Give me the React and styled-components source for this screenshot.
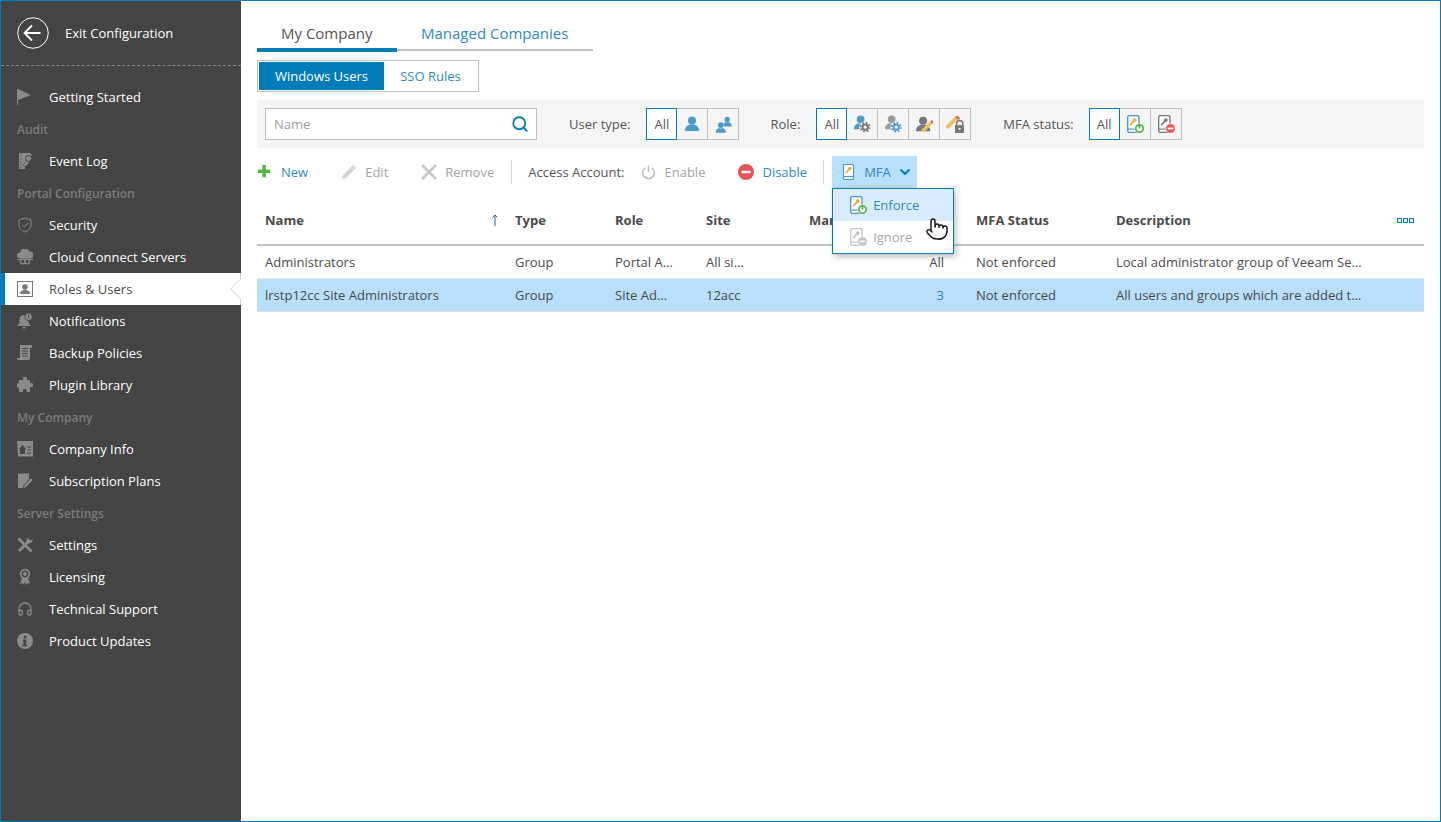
import React from 'react';
import styled, { createGlobalStyle } from 'styled-components';
import { Pointer, Search, ChevronDown, Headphones } from 'lucide-react';

const GlobalStyle = createGlobalStyle`
html, body {
  margin: 0;
  padding: 0;
  background: #fff;
}
body {
  font-family: "Open Sans", "Liberation Sans", sans-serif;
  font-size: 13px;
  color: #4a4a4a;
}
* { box-sizing: border-box; }
`

const BLUE = '#007cba';
const GRID = '250px 100px 91px 103px 167px 140px 1fr';

const Frame = styled.div`
width: 1441px;
height: 822px;
border: 1px solid ${BLUE};
display: flex;
overflow: hidden;
`

const Sidebar = styled.div`
width: 240px;
flex-shrink: 0;
background: #444444;
display: flex;
flex-direction: column;
`

const ExitRow = styled.div`
height: 65px;
border-bottom: 1px dashed #8a8a8a;
display: flex;
align-items: center;
gap: 16px;
padding: 0 0 1px 16px;
color: #fff;
`

const NavList = styled.div`
padding-top: 15px;
display: flex;
flex-direction: column;
`

const NavHeading = styled.div`
height: 32px;
line-height: 33px;
padding-left: 16px;
font-size: 12px;
font-weight: 600;
color: #7c7c7c;
`

const NavItem = styled.div`
height: 32px;
display: flex;
align-items: center;
gap: 16px;
padding-left: ${p => p.$active ? '12px' : '16px'};
margin-left: 0;
position: relative;
color: ${p => p.$active ? '#4a4a4a' : '#fff'};
background: ${p => p.$active ? '#fff' : 'transparent'};
border-left: ${p => p.$active ? `4px solid ${BLUE}` : 'none'};
svg { flex-shrink: 0; }
`

const Notch = styled.svg`
position: absolute;
right: 0;
top: 0;
`

const Main = styled.div`
flex: 1;
min-width: 0;
padding: 0 16px;
display: flex;
flex-direction: column;
`

const Tabs = styled.div`
height: 51px;
display: flex;
align-items: flex-end;
`

const Tab = styled.div`
font-size: 15px;
height: ${p => p.$active ? '37px' : '35px'};
width: ${p => p.$active ? '140px' : '196px'};
padding: 0 24px;
line-height: ${p => p.$active ? '36px' : '34px'};
margin-bottom: ${p => p.$active ? '0' : '1px'};
color: ${p => p.$active ? '#555' : '#2f88bd'};
border-bottom: ${p => p.$active ? `4px solid ${BLUE}` : '2px solid #bfbfbf'};
`

const SubTabs = styled.div`
margin-top: 8px;
width: 222px;
height: 32px;
padding: 1px;
border: 1px solid #bfbfbf;
display: flex;
`

const SubTab = styled.div`
width: ${p => p.$active ? '125px' : '93px'};
line-height: 28px;
text-align: center;
color: ${p => p.$active ? '#fff' : '#2f88bd'};
background: ${p => p.$active ? BLUE : '#fff'};
`

const FilterBar = styled.div`
margin-top: 8px;
height: 48px;
background: #f5f5f5;
padding-left: 8px;
display: flex;
align-items: center;
`

const SearchBox = styled.div`
width: 272px;
height: 32px;
background: #fff;
border: 1px solid #bfbfbf;
padding: 0 7px 0 8px;
display: flex;
align-items: center;
justify-content: space-between;
color: #a0a0a0;
`

const FilterLabel = styled.span`
margin-left: ${p => p.$gap}px;
margin-right: ${p => p.$after}px;
color: #555;
`

const ButtonGroup = styled.div`
display: flex;
`

const FilterButton = styled.div`
width: 31px;
height: 32px;
display: flex;
align-items: center;
justify-content: center;
background: ${p => p.$active ? '#fff' : 'transparent'};
border: 1px solid ${p => p.$active ? BLUE : '#bfbfbf'};
border-left: ${p => p.$active ? `1px solid ${BLUE}` : 'none'};
color: #555;
`

const Toolbar = styled.div`
margin-top: 8px;
height: 32px;
display: flex;
align-items: center;
position: relative;
z-index: 2;
`

const Tool = styled.div`
display: flex;
align-items: center;
gap: ${p => p.$gap || 8}px;
margin-left: ${p => p.$left || 0}px;
color: ${p => p.$off ? '#a3a3a3' : '#2f88bd'};
`

const ToolSep = styled.div`
width: 1px;
height: 24px;
margin-left: ${p => p.$left}px;
background: #d8d8d8;
`

const ToolLabel = styled.span`
margin-left: 16px;
color: #555;
`

const MfaButton = styled.div`
position: relative;
align-self: flex-start;
width: 85px;
height: 33px;
margin-left: 8px;
padding: 0 0 1px 10px;
display: flex;
align-items: center;
background: #b8dffc;
color: #2f88bd;
`

const MfaLabel = styled.span`
margin-left: 6px;
margin-right: 6px;
`

const Menu = styled.div`
position: absolute;
left: 0;
top: 32px;
width: 122px;
height: 66px;
background: #fff;
border: 1px solid ${BLUE};
box-shadow: 2px 3px 6px rgba(0,0,0,.25);
`

const MenuItem = styled.div`
height: 32px;
display: flex;
align-items: center;
gap: 6px;
padding-left: 16px;
background: ${p => p.$hover ? '#d9ecfd' : '#fff'};
color: ${p => p.$off ? '#a8a8a8' : '#2f88bd'};
`

const HandCursor = styled.div`
position: absolute;
left: 92px;
top: 28px;
line-height: 0;
`

const Table = styled.div`
margin-top: 8px;
`

const HeadRow = styled.div`
height: 50px;
display: grid;
grid-template-columns: ${GRID};
align-items: center;
border-bottom: 2px solid #c4c4c4;
font-weight: 700;
color: #4a4a4a;
padding-bottom: 0;
`

const Row = styled.div`
height: 33px;
display: grid;
grid-template-columns: ${GRID};
align-items: center;
border-bottom: 1px solid #e3e3e3;
background: ${p => p.$selected ? '#b8dffc' : '#fff'};
color: #4a4a4a;
`

const Cell = styled.div`
padding: ${p => p.$right ? '0 24px 0 8px' : '0 8px'};
white-space: nowrap;
overflow: hidden;
text-align: ${p => p.$right ? 'right' : 'left'};
color: ${p => p.$link ? '#2f88bd' : 'inherit'};
`

const HeadCell = styled(Cell)`
display: flex;
align-items: center;
justify-content: space-between;
overflow: visible;
`

const ColumnDots = styled.div`
display: flex;
gap: 1px;
margin-right: 2px;
`

const Dot = styled.span`
width: 5px;
height: 5px;
border: 1px solid ${BLUE};
`

const Ico = ({ size = 16, children }) => (
  <svg width={size} height={size} viewBox="0 0 16 16">{children}</svg>
)

const G = '#8b8b8b';
const D = '#444444';

const navIcons = {
  flag: <Ico><path d="M0 0h1v16H0z" fill={G} /><path d="M1 0l13 6L1 11z" fill={G} /></Ico>,
  log: <Ico><path d="M2 0h11l2 2-4 5-3 4v5H2z" fill={G} /><path d="M4 0v16" stroke={D} strokeWidth=".8" strokeDasharray="1 1" /><circle cx="11.5" cy="5.5" r="3" fill={G} stroke={D} /><path d="M10 7.500l-4 4.500 1 1.500 1-1 1 1 3-4z" fill={G} stroke={D} strokeWidth=".6" /></Ico>,
  shield: <Ico><path d="M8 1l6 2v5c0 3.500-3 6-6 7-3-1-6-3.500-6-7V3z" fill="none" stroke={G} /><path d="M5 8l2.200 2L11 6" fill="none" stroke={G} /></Ico>,
  cloud: <Ico><path d="M3 10a3 3 0 0 1 0-6 5 5 0 0 1 9.500-1A3.500 3.500 0 0 1 13.500 10z" fill={G} transform="translate(0 -.5)" /><path d="M0 10.500h16" stroke={G} /><circle cx="5.800" cy="12.500" r="2.400" fill="none" stroke={G} strokeWidth="1.300" /><circle cx="10.200" cy="12.500" r="2.400" fill="none" stroke={G} strokeWidth="1.300" /></Ico>,
  roles: <Ico><rect x=".5" y=".5" width="15" height="15" fill="#fff" stroke="#777" /><circle cx="8" cy="6" r="2.800" fill="#777" /><path d="M3 13c0-3 2-4 5-4s5 1 5 4z" fill="#777" /></Ico>,
  bell: <Ico><path d="M7 2a4.500 4.500 0 0 0-4.500 4.500V10L0 13h14l-2.500-3V8z" fill={G} /><path d="M5 14h4l-2 2z" fill={G} /><circle cx="11.500" cy="3.800" r="3.800" fill={G} stroke={D} strokeWidth=".8" /><path d="M11.500 1.500v3M11.500 5.300v.8" stroke={D} /></Ico>,
  scroll: <Ico><path d="M3 0h12v3h-2v10a2 2 0 0 1-2 2H1a2 2 0 0 1-1-2h3z" fill={G} /><path d="M5 3.500h6M5 6h6M5 8.500h6M5 11h6" stroke={D} /></Ico>,
  puzzle: <Ico><path d="M6 1a2 2 0 0 1 4 0l-.5 2H13v3.500l1-.5a2 2 0 0 1 0 4.500l-1-.5V15H9.500l.3-1a2 2 0 0 0-4 0l.2 1H2v-4.500l-.3.2a2 2 0 0 1 0-4.700l.3.2V3h4.300z" fill={G} /></Ico>,
  company: <Ico><path d="M0 0h16v15l-1 1-1-1-1 1-1-1-1 1-1-1-1 1-1-1-1 1-1-1-1 1-1-1-1 1-2-1z" fill={G} /><path d="M2 8l3.500-4L9 8H8v5H3V8z" fill={D} /><path d="M10 6h4M10 9h4M10 12h4" stroke={D} /></Ico>,
  plan: <Ico><path d="M1 1h11v5l-5 6-1 3H1z" fill={G} /><path d="M1 .5h11" stroke={G} strokeDasharray="1 1" /><path d="M14 5l2 2-7 7.500-3 1 1-3z" fill={G} stroke={D} strokeWidth=".6" /></Ico>,
  tools: <Ico><path d="M1.500 1.500L14.500 14.500" stroke={G} strokeWidth="2.600" /><path d="M13 3L2 14" stroke={G} strokeWidth="2.800" /><path d="M10 1.500a4 4 0 0 0 1 5l3.500-1a4 4 0 0 0 1-3.500l-2.500 2-2-1.500 1.500-2.500z" fill={G} /></Ico>,
  award: <Ico><circle cx="8" cy="5" r="4.300" fill="none" stroke={G} strokeWidth="1.800" /><circle cx="8" cy="5" r="1.900" fill={G} /><path d="M5 9l-2 6 2.500-1 1.500 2 1-4 1 4 1.500-2 2.500 1-2-6-3 1z" fill={G} /></Ico>,
  info: <Ico><circle cx="8" cy="8" r="8" fill={G} /><circle cx="8" cy="4" r="1.500" fill={D} /><path d="M6 6.500h3.200V12H10.500v1.200h-5V12h1V7.700H6z" fill={D} /></Ico>,
}

const nav = [
  { label: 'Getting Started', icon: 'flag' },
  { heading: 'Audit' },
  { label: 'Event Log', icon: 'log' },
  { heading: 'Portal Configuration' },
  { label: 'Security', icon: 'shield' },
  { label: 'Cloud Connect Servers', icon: 'cloud' },
  { label: 'Roles & Users', icon: 'roles', active: true },
  { label: 'Notifications', icon: 'bell' },
  { label: 'Backup Policies', icon: 'scroll' },
  { label: 'Plugin Library', icon: 'puzzle' },
  { heading: 'My Company' },
  { label: 'Company Info', icon: 'company' },
  { label: 'Subscription Plans', icon: 'plan' },
  { heading: 'Server Settings' },
  { label: 'Settings', icon: 'tools' },
  { label: 'Licensing', icon: 'award' },
  { label: 'Technical Support', icon: 'phones' },
  { label: 'Product Updates', icon: 'info' },
]

const PB = '#4a9ace';

const Person = ({ color = PB, x = 0, y = 0, s = 1, ring }) => (
  <g transform={`translate(${x} ${y}) scale(${s})`} stroke={ring ? '#f5f5f5' : 'none'} strokeWidth={ring ? 1.400 : 0} paintOrder="stroke">
    <path d="M1 15c0-4 2-5.500 4.500-6.500h5C13 9.500 15 11 15 15z" fill={color} />
    <circle cx="8" cy="4.500" r="4" fill={color} />
  </g>
)

const Gear = ({ color, x, y }) => (
  <g transform={`translate(${x} ${y})`}>
    <circle r="5.200" fill="#f5f5f5" />
    <circle r="2.400" fill="none" stroke={color} strokeWidth="1.800" />
    <circle r="4" fill="none" stroke={color} strokeWidth="1.600" strokeDasharray="1.500 1.640" />
  </g>
)

const Phone = ({ color = '#4a9ace' }) => (
  <>
    <rect x="1.500" y=".5" width="10" height="15" rx="1.500" fill="#fff" stroke={color} strokeWidth="1.200" />
    <path d="M1.500 12.500h10" stroke={color} />
    <circle cx="7.800" cy="4.500" r="1.700" fill="#f0a830" />
    <path d="M7 5.500L3.800 9" stroke="#f0a830" strokeWidth="1.500" />
  </>
)

const PowerBadge = ({ color = '#56b545' }) => (
  <g>
    <circle cx="12" cy="12" r="4.500" fill="#fff" />
    <circle cx="12" cy="12" r="3.300" fill="none" stroke={color} strokeWidth="1.600" />
    <path d="M12 8v4" stroke={color} strokeWidth="1.600" />
  </g>
)

const MinusBadge = ({ color = '#e8545a' }) => (
  <g>
    <circle cx="12" cy="12" r="4.300" fill={color} stroke="#fff" strokeWidth=".6" />
    <path d="M9.500 12h5" stroke="#fff" strokeWidth="1.600" />
  </g>
)

const MfaOn = ({ size = 18 }) => <Ico size={size}><Phone /><PowerBadge /></Ico>
const MfaOff = ({ size = 18, color = '#777', badge }) => (
  <Ico size={size}>
    <rect x="1.500" y=".5" width="10" height="15" rx="1.500" fill="#fff" stroke={color} strokeWidth="1.200" />
    <path d="M1.500 12.500h10" stroke={color} />
    <circle cx="7.800" cy="4.500" r="1.700" fill={color} />
    <path d="M7 5.500L3.800 9" stroke={color} strokeWidth="1.500" />
    <MinusBadge color={badge} />
  </Ico>
)

const Lock = () => (
  <g>
    <path d="M9.500 9V7.500a2.700 2.700 0 0 1 5.400 0V9" fill="none" stroke="#777" strokeWidth="1.300" />
    <rect x="8" y="9" width="8" height="7" fill="#777" />
    <circle cx="12" cy="12.300" r="1" fill="#f5f5f5" />
  </g>
)

const Pencil = ({ x = 0, y = 0, s = 1, color = '#f0c060' }) => (
  <g transform={`translate(${x} ${y}) scale(${s})`}>
    <path d="M0 8L7 1" stroke={color} strokeWidth="2.600" />
    <path d="M6 0.500L8 2.500" stroke="#e8545a" strokeWidth="1.600" transform="translate(.6 -.4)" />
  </g>
)

const columns = ['Type', 'Role', 'Site', 'Managed Companies', 'MFA Status', 'Description']

const rows = [
  { name: 'Administrators', type: 'Group', role: 'Portal A…', site: 'All si…', count: 'All', status: 'Not enforced', text: 'Local administrator group of Veeam Se…' },
  { name: 'lrstp12cc Site Administrators', type: 'Group', role: 'Site Ad…', site: '12acc', count: '3', link: true, status: 'Not enforced', text: 'All users and groups which are added t…', selected: true },
]

const App = () => (
  <Frame>
    <GlobalStyle />
    <Sidebar>
      <ExitRow>
        <svg width="32" height="32" viewBox="0 0 32 32">
          <circle cx="16" cy="16" r="15.300" fill="none" stroke="#fff" />
          <path d="M7.500 16h16M15 8.500L7.500 16l7.500 7.500" fill="none" stroke="#fff" strokeWidth="1.800" />
        </svg>
        Exit Configuration
      </ExitRow>
      <NavList>
        {nav.map(item => item.heading
          ? <NavHeading key={item.heading}>{item.heading}</NavHeading>
          : (
            <NavItem key={item.label} $active={item.active}>
              {item.icon === 'phones'
                ? <Headphones size={16} color={G} strokeWidth={2} />
                : navIcons[item.icon]}
              {item.label}
              {item.active && (
                <Notch width="12" height="32" viewBox="0 0 12 32">
                  <path d="M11.500 0v6L1.500 16l10 10v6" fill="#fff" stroke="#d0d0d0" />
                </Notch>
              )}
            </NavItem>
          ))}
      </NavList>
    </Sidebar>
    <Main>
      <Tabs>
        <Tab $active>My Company</Tab>
        <Tab>Managed Companies</Tab>
      </Tabs>
      <SubTabs>
        <SubTab $active>Windows Users</SubTab>
        <SubTab>SSO Rules</SubTab>
      </SubTabs>
      <FilterBar>
        <SearchBox>
          Name
          <Search size={18} color={BLUE} strokeWidth={2.400} />
        </SearchBox>
        <FilterLabel $gap={32} $after={16}>User type:</FilterLabel>
        <ButtonGroup>
          <FilterButton $active>All</FilterButton>
          <FilterButton><Ico size={16}><Person /></Ico></FilterButton>
          <FilterButton>
            <Ico size={17}>
              <Person s={.62} x={6.500} y={0.500} />
              <Person s={.68} x={0} y={5.500} ring />
            </Ico>
          </FilterButton>
        </ButtonGroup>
        <FilterLabel $gap={31} $after={16}>Role:</FilterLabel>
        <ButtonGroup>
          <FilterButton $active>All</FilterButton>
          <FilterButton>
            <Ico size={18}><Person s={.85} x={0} y={0} /><Gear color="#777" x={10.800} y={10.800} /></Ico>
          </FilterButton>
          <FilterButton>
            <Ico size={18}><Person color="#9a9a9a" s={.85} x={0} y={0} /><Gear color={PB} x={10.800} y={10.800} /></Ico>
          </FilterButton>
          <FilterButton>
            <Ico size={18}><Person color="#777" s={.9} x={0} y={1} /><Pencil x={6.500} y={5} s={1.200} /></Ico>
          </FilterButton>
          <FilterButton>
            <Ico size={18}><Pencil x={.5} y={1} s={1.300} /><Lock /></Ico>
          </FilterButton>
        </ButtonGroup>
        <FilterLabel $gap={32} $after={15}>MFA status:</FilterLabel>
        <ButtonGroup>
          <FilterButton $active>All</FilterButton>
          <FilterButton><MfaOn /></FilterButton>
          <FilterButton><MfaOff /></FilterButton>
        </ButtonGroup>
      </FilterBar>
      <Toolbar>
        <Tool $left={1} $gap={9}>
          <Ico size={14}><path d="M5 0h4v5h5v4H9v5H5V9H0V5h5z" fill="#56b545" /></Ico>
          New
        </Tool>
        <Tool $left={33} $off>
          <Ico><path d="M1 15l1-4L12 1l3 3L5 14z" fill="#d5d5d5" /></Ico>
          Edit
        </Tool>
        <Tool $left={33} $off>
          <Ico><path d="M2 0l6 6 6-6 2 2-6 6 6 6-2 2-6-6-6 6-2-2 6-6-6-6z" fill="#c8c8c8" /></Ico>
          Remove
        </Tool>
        <ToolSep $left={17} />
        <ToolLabel>Access Account:</ToolLabel>
        <Tool $left={17} $gap={8} $off>
          <Ico size={15}>
            <path d="M4.500 3a6.300 6.300 0 1 0 7 0" fill="none" stroke="#c0c0c0" strokeWidth="1.700" />
            <path d="M8 .5v7" stroke="#c0c0c0" strokeWidth="1.700" />
          </Ico>
          Enable
        </Tool>
        <Tool $left={33}>
          <Ico><circle cx="8" cy="8" r="8" fill="#e8545a" /><path d="M3.500 8h9" stroke="#fff" strokeWidth="2.400" /></Ico>
          Disable
        </Tool>
        <ToolSep $left={16} />
        <MfaButton>
          <Ico size={16}><Phone /></Ico>
          <MfaLabel>MFA</MfaLabel>
          <ChevronDown size={16} color={BLUE} strokeWidth={3} />
          <Menu>
            <MenuItem $hover>
              <MfaOn />
              Enforce
            </MenuItem>
            <MenuItem $off>
              <MfaOff color="#c4c4c4" badge="#c4c4c4" />
              Ignore
            </MenuItem>
            <HandCursor>
              <Pointer size={24} color="#111" fill="#fff" strokeWidth={1.400} />
            </HandCursor>
          </Menu>
        </MfaButton>
      </Toolbar>
      <Table>
        <HeadRow>
          <HeadCell>
            Name
            <svg width="8" height="12" viewBox="0 0 8 12">
              <path d="M4 12V1M1.500 3.500L4 1l2.500 2.500" fill="none" stroke="#33607c" />
            </svg>
          </HeadCell>
          {columns.map((c, i) => (
            <HeadCell key={c}>
              {c}
              {i === columns.length - 1 && (
                <ColumnDots>
                  <Dot /><Dot /><Dot />
                </ColumnDots>
              )}
            </HeadCell>
          ))}
        </HeadRow>
        {rows.map(r => (
          <Row key={r.name} $selected={r.selected}>
            <Cell>{r.name}</Cell>
            <Cell>{r.type}</Cell>
            <Cell>{r.role}</Cell>
            <Cell>{r.site}</Cell>
            <Cell $right $link={r.link}>{r.count}</Cell>
            <Cell>{r.status}</Cell>
            <Cell>{r.text}</Cell>
          </Row>
        ))}
      </Table>
    </Main>
  </Frame>
)

export default App;
